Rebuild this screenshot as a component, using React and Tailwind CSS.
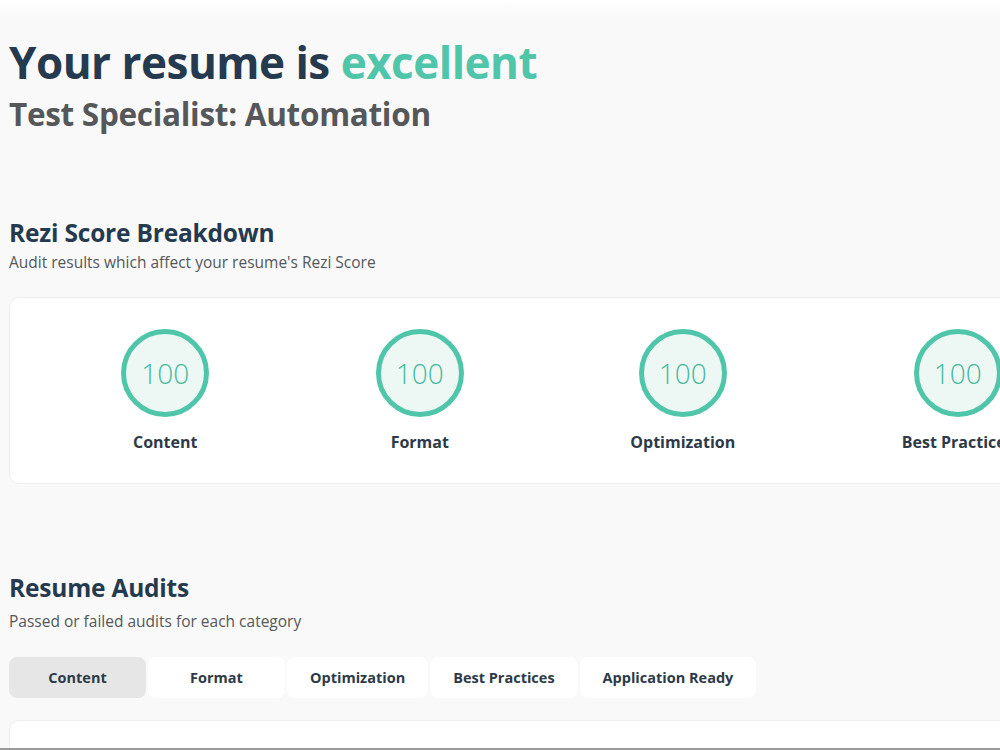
import React, { useState } from 'react';

const scores = [
  { label: 'Content', value: 100 },
  { label: 'Format', value: 100 },
  { label: 'Optimization', value: 100 },
  { label: 'Best Practices', value: 100 },
];

const tabs = ['Content', 'Format', 'Optimization', 'Best Practices', 'Application Ready'];

const ScoreCircle = ({ label, value }) => (
  <div className="flex flex-col items-center">
    <div className="w-[88px] h-[88px] rounded-full border-[5px] border-[#4fc6a9] bg-[#edf8f5] flex items-center justify-center">
      <span className="text-[28px] font-light text-[#46b89c] leading-none">{value}</span>
    </div>
    <div className="mt-[17px] text-[16px] font-bold text-[#2d3a48] leading-none">{label}</div>
  </div>
);

const App = () => {
  const [activeTab, setActiveTab] = useState('Content');

  return (
    <div className="h-[750px] overflow-hidden bg-[#f9f9f9] font-['Open_Sans',sans-serif] relative">
      <div className="h-4 bg-gradient-to-b from-white to-[#f9f9f9]" />

      <div className="w-[1126px] pl-[9px]">
        {/* --- HEADER --- */}
        <h1 className="mt-[22px] text-[44px] font-bold leading-[48px] text-[#253a4f] tracking-[-0.5px]">
          Your resume is <span className="text-[#4fc6a9]">excellent</span>
        </h1>
        <h2 className="mt-[8px] text-[31.5px] font-bold leading-[40px] text-[#555759] tracking-[-0.3px]">
          Test Specialist: Automation
        </h2>

        {/* --- SCORE BREAKDOWN --- */}
        <h3 className="mt-[84px] text-[24.5px] font-bold leading-[30px] text-[#253a4f] tracking-[-0.2px]">Rezi Score Breakdown</h3>
        <p className="mt-[3px] text-[15.5px] leading-[22px] text-[#555759]">
          Audit results which affect your resume's Rezi Score
        </p>

        <div className="mt-[24px] h-[187px] bg-white rounded-[10px] border border-[#efefef] px-[28px] pb-[3px] flex items-center justify-around">
          {scores.map((s) => (
            <ScoreCircle key={s.label} {...s} />
          ))}
        </div>

        {/* --- AUDITS --- */}
        <h3 className="mt-[89px] text-[24.5px] font-bold leading-[30px] text-[#253a4f] tracking-[-0.2px]">Resume Audits</h3>
        <p className="mt-[7px] text-[15.5px] leading-[22px] text-[#555759]">
          Passed or failed audits for each category
        </p>

        <div className="mt-[25px] flex gap-[2px]">
          {tabs.map((t) => (
            <button
              key={t}
              onClick={() => setActiveTab(t)}
              className={
                'h-[41px] min-w-[137px] px-[23px] rounded-[8px] text-[14.5px] font-bold text-[#2d3a48] ' +
                (activeTab === t ? 'bg-[#e6e6e6]' : 'bg-white')
              }
            >
              {t}
            </button>
          ))}
        </div>

        <div className="mt-[22px] h-[60px] bg-white rounded-[10px] border border-[#efefef] pl-[180px] pt-[27px]">
          <div className="text-[18px] font-bold text-[#253a4f] leading-none">Content Quality Assessment Checks</div>
        </div>
      </div>

      <div className="absolute left-0 right-0 top-[748px] h-[2px] bg-[#9a9a9a]" />
    </div>
  );
};

export default App;
